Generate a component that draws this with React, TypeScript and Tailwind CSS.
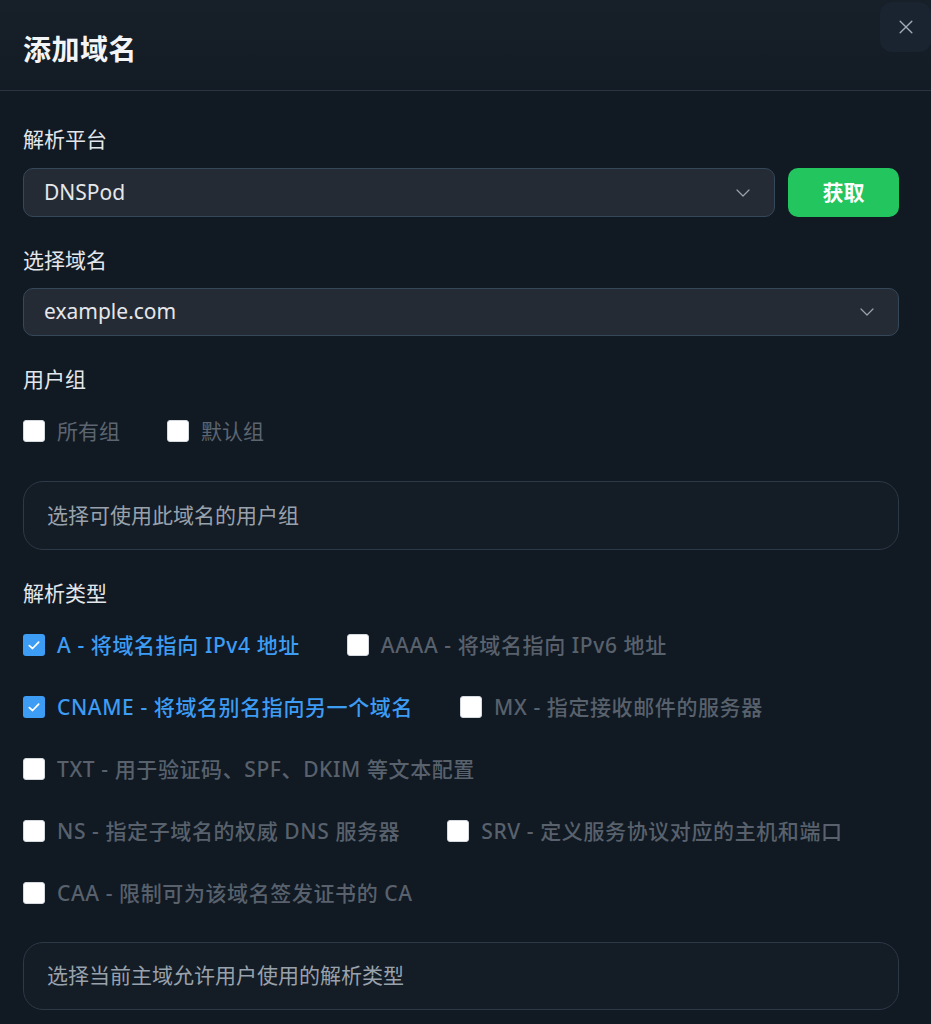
import React from "react";

const font = { fontFamily: '"Noto Sans", "Noto Sans CJK SC", sans-serif' };

function Chevron() {
  return (
    <svg width="18" height="18" viewBox="0 0 24 24" fill="none" stroke="#9aa3ad" strokeWidth="1.6" strokeLinecap="round" strokeLinejoin="round">
      <polyline points="4 8 12 16 20 8" />
    </svg>
  );
}

function Box({ checked }: { checked?: boolean }) {
  if (checked) {
    return (
      <span className="flex h-[22px] w-[22px] shrink-0 items-center justify-center rounded-[3px] bg-[#3d9cf4]">
        <svg width="14" height="14" viewBox="0 0 24 24" fill="none" stroke="#ffffff" strokeWidth="3" strokeLinecap="round" strokeLinejoin="round">
          <polyline points="4 13 9.5 18 20 7" />
        </svg>
      </span>
    );
  }
  return <span className="block h-[22px] w-[22px] shrink-0 rounded-[3px] border border-[#d4d9e0] bg-white" />;
}

function Opt({ label, checked }: { label: string; checked?: boolean }) {
  return (
    <div className="flex items-center gap-[12px]">
      <Box checked={checked} />
      <span className={"text-[21px] font-medium leading-[30px] tracking-[0.6px] " + (checked ? "text-[#3d9cf4]" : "text-[#58616c]")}>{label}</span>
    </div>
  );
}

export default function App() {
  return (
    <div className="min-h-screen w-full bg-[#111923]" style={font}>
      <div className="relative flex h-[91px] items-center border-b border-[#2a3440] bg-gradient-to-b from-[#172029] to-[#131b25] px-[23px] pt-[8px]">
        <h1 className="text-[28px] font-bold leading-[36px] tracking-[0.5px] text-[#f3f4f6]">添加域名</h1>
        <button className="absolute right-0 top-[2px] flex h-[50px] w-[51px] items-center justify-center rounded-[12px] bg-[#1a2430]">
          <svg width="20" height="20" viewBox="0 0 24 24" fill="none" stroke="#a3adb8" strokeWidth="1.6" strokeLinecap="round">
            <line x1="5" y1="5" x2="19" y2="19" />
            <line x1="19" y1="5" x2="5" y2="19" />
          </svg>
        </button>
      </div>

      <div className="pl-[23px] pr-[32px] pt-[33px] pb-[14px]">
        <div className="text-[21px] leading-[30px] text-[#e3e7eb]">解析平台</div>
        <div className="mt-[14px] flex gap-[13px]">
          <div className="flex h-[49px] flex-1 items-center justify-between rounded-[10px] border border-[#34485a] bg-[#242b35] pl-[20px] pr-[22px]">
            <span className="text-[21px] text-[#e5e7eb]">DNSPod</span>
            <Chevron />
          </div>
          <button className="h-[49px] w-[111px] rounded-[10px] bg-[#22c55e] text-[21px] font-bold text-white">获取</button>
        </div>

        <div className="mt-[28px] text-[21px] leading-[30px] text-[#e3e7eb]">选择域名</div>
        <div className="mt-[13px] flex h-[48px] items-center justify-between rounded-[10px] border border-[#34485a] bg-[#242b35] pl-[20px] pr-[22px]">
          <span className="text-[21px] text-[#e5e7eb]">example.com</span>
          <Chevron />
        </div>

        <div className="mt-[28px] text-[21px] leading-[30px] text-[#e3e7eb]">用户组</div>
        <div className="mt-[22px] flex items-center">
          <div className="flex items-center gap-[12px]">
            <Box />
            <span className="text-[21px] leading-[30px] text-[#5c6570]">所有组</span>
          </div>
          <div className="ml-[47px] flex items-center gap-[12px]">
            <Box />
            <span className="text-[21px] leading-[30px] text-[#5c6570]">默认组</span>
          </div>
        </div>

        <div className="mt-[35px] flex h-[69px] items-center rounded-[20px] border border-[#2c3946] bg-[#141c26] px-[23px]">
          <span className="text-[21px] text-[#99a2ac]">选择可使用此域名的用户组</span>
        </div>

        <div className="mt-[28px] text-[21px] leading-[30px] text-[#e3e7eb]">解析类型</div>
        <div className="mt-[22px] flex flex-col gap-[32px]">
          <div className="flex items-center gap-[47px]">
            <Opt checked label="A - 将域名指向 IPv4 地址" />
            <Opt label="AAAA - 将域名指向 IPv6 地址" />
          </div>
          <div className="flex items-center gap-[47px]">
            <Opt checked label="CNAME - 将域名别名指向另一个域名" />
            <Opt label="MX - 指定接收邮件的服务器" />
          </div>
          <div className="flex items-center gap-[47px]">
            <Opt label="TXT - 用于验证码、SPF、DKIM 等文本配置" />
          </div>
          <div className="flex items-center gap-[47px]">
            <Opt label="NS - 指定子域名的权威 DNS 服务器" />
            <Opt label="SRV - 定义服务协议对应的主机和端口" />
          </div>
          <div className="flex items-center gap-[47px]">
            <Opt label="CAA - 限制可为该域名签发证书的 CA" />
          </div>
        </div>

        <div className="mt-[34px] flex h-[68px] items-center rounded-[20px] border border-[#2c3946] bg-[#141c26] px-[23px]">
          <span className="text-[21px] text-[#99a2ac]">选择当前主域允许用户使用的解析类型</span>
        </div>
      </div>
    </div>
  );
}
